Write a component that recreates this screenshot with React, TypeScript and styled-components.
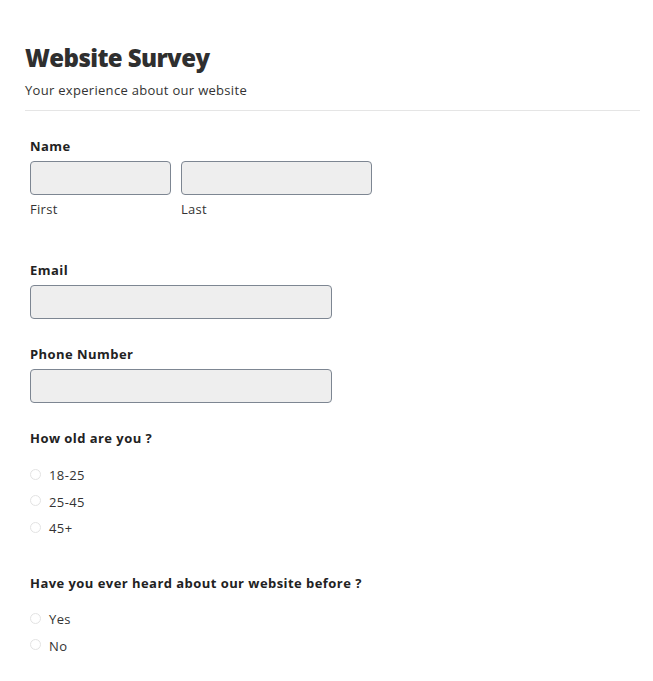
import React from "react";
import styled, { createGlobalStyle } from "styled-components";

const Global = createGlobalStyle`
  html, body { margin: 0; padding: 0; background: #fff; }
  body { font-family: "Open Sans", "Liberation Sans", sans-serif; color: #333; }
  * { box-sizing: border-box; }
`;

const Page = styled.div`
  padding: 40px 13px 0 25px;
`;

const Header = styled.header`
  border-bottom: 1px solid #e5e5e5;
  padding-bottom: 11px;
`;

const Title = styled.h1`
  margin: 0;
  font-size: 24px;
  line-height: 36px;
  font-weight: 800;
  color: #2f2f2f;
  letter-spacing: -0.6px;
`;

const Subtitle = styled.p`
  margin: 5px 0 0;
  font-size: 13px;
  line-height: 18px;
  color: #333;
  letter-spacing: 0.3px;
`;

const Form = styled.form`
  padding: 26px 0 0 5px;
  display: flex;
  flex-direction: column;
`;

const Field = styled.div<{ $gap?: number }>`
  margin-bottom: ${(p) => p.$gap ?? 0}px;
`;

const Label = styled.div`
  font-size: 13px;
  font-weight: 700;
  line-height: 18px;
  color: #222;
  margin-bottom: 6px;
  letter-spacing: 0.45px;
`;

const Row = styled.div`
  display: flex;
  gap: 10px;
`;

const Col = styled.div`
  display: flex;
  flex-direction: column;
`;

const Input = styled.div<{ $w: number }>`
  width: ${(p) => p.$w}px;
  height: 34px;
  background: #eee;
  border: 1px solid #7d8692;
  border-radius: 4px;
`;

const Sub = styled.div`
  font-size: 13px;
  line-height: 18px;
  margin-top: 5px;
  color: #333;
  letter-spacing: 0.3px;
`;

const Question = styled(Label)<{ $after?: number }>`
  margin-bottom: ${(p) => p.$after ?? 19}px;
`;

const Options = styled.div`
  display: flex;
  flex-direction: column;
  gap: 8.5px;
`;

const Option = styled.label`
  display: flex;
  align-items: center;
  gap: 8px;
  font-size: 13px;
  line-height: 18px;
  color: #333;
  letter-spacing: 0.4px;
`;

const Radio = styled.span`
  width: 11px;
  height: 11px;
  border-radius: 50%;
  border: 1px solid #e3e3e3;
  background: #fff;
  margin-top: -2px;
`;

export default function App() {
  return (
    <>
      <Global />
      <Page>
        <Header>
          <Title>Website Survey</Title>
          <Subtitle>Your experience about our website</Subtitle>
        </Header>
        <Form>
          <Field $gap={43}>
            <Label>Name</Label>
            <Row>
              <Col>
                <Input $w={141} />
                <Sub>First</Sub>
              </Col>
              <Col>
                <Input $w={191} />
                <Sub>Last</Sub>
              </Col>
            </Row>
          </Field>
          <Field $gap={26}>
            <Label>Email</Label>
            <Input $w={302} />
          </Field>
          <Field $gap={26}>
            <Label>Phone Number</Label>
            <Input $w={302} />
          </Field>
          <Field $gap={37}>
            <Question>How old are you ?</Question>
            <Options>
              <Option><Radio />18-25</Option>
              <Option><Radio />25-45</Option>
              <Option><Radio />45+</Option>
            </Options>
          </Field>
          <Field>
            <Question $after={18}>Have you ever heard about our website before ?</Question>
            <Options>
              <Option><Radio />Yes</Option>
              <Option><Radio />No</Option>
            </Options>
          </Field>
        </Form>
      </Page>
    </>
  );
}
